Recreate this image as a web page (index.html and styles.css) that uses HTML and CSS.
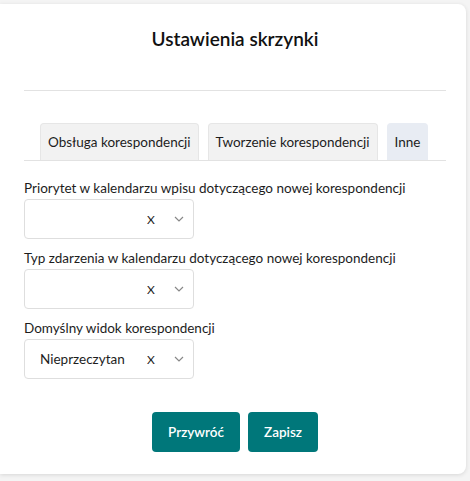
FILE: index.html
```html
<!DOCTYPE html>
<html lang="pl">
<head>
<meta charset="utf-8">
<link rel="stylesheet" href="styles.css">
</head>
<body>
<div class="card">
  <h1 class="title">Ustawienia skrzynki</h1>
  <hr class="divider">
  <div class="tabs">
    <div class="tab">Obsługa korespondencji</div>
    <div class="tab">Tworzenie korespondencji</div>
    <div class="tab active">Inne</div>
  </div>
  <div class="field">
    <label class="label">Priorytet w kalendarzu wpisu dotyczącego nowej korespondencji</label>
    <div class="select"><span class="value"></span><span class="clear">X</span><svg class="chev" width="10" height="6" viewBox="0 0 10 6"><path d="M1 1l4 4 4-4" fill="none" stroke="#888" stroke-width="1.2"/></svg></div>
  </div>
  <div class="field">
    <label class="label">Typ zdarzenia w kalendarzu dotyczącego nowej korespondencji</label>
    <div class="select"><span class="value"></span><span class="clear">X</span><svg class="chev" width="10" height="6" viewBox="0 0 10 6"><path d="M1 1l4 4 4-4" fill="none" stroke="#888" stroke-width="1.2"/></svg></div>
  </div>
  <div class="field">
    <label class="label">Domyślny widok korespondencji</label>
    <div class="select"><span class="value">Nieprzeczytan</span><span class="clear">X</span><svg class="chev" width="10" height="6" viewBox="0 0 10 6"><path d="M1 1l4 4 4-4" fill="none" stroke="#888" stroke-width="1.2"/></svg></div>
  </div>
  <div class="actions">
    <button class="btn">Przywróć</button>
    <button class="btn">Zapisz</button>
  </div>
</div>
</body>
</html>
```
FILE: styles.css
```css
* { box-sizing: border-box; }
html, body { margin: 0; padding: 0; background: #f4f4f4; }
body {
  font-family: Lato, "Noto Sans", sans-serif;
  color: #1d1d1d;
  width: 470px;
  height: 481px;
  overflow: hidden;
  padding: 4px 4px 7px 0;
}
.card {
  background: #fff;
  border-radius: 0 8px 8px 0;
  box-shadow: 0 1px 4px rgba(0,0,0,0.12);
  height: 470px;
  padding: 0 20px 0 24px;
  display: flex;
  flex-direction: column;
}
.title {
  margin: 23px 0 0;
  text-align: center;
  font-size: 19px;
  font-weight: 600;
  line-height: 24px;
  color: #111;
}
.divider {
  border: 0;
  border-top: 1px solid #e2e2e2;
  margin: 39px 0 0;
}
.tabs {
  margin-top: 32px;
  display: flex;
  gap: 9px;
  padding-left: 16px;
  border-bottom: 1px solid #e2e2e2;
}
.tab {
  background: #f2f2f2;
  border: 1px solid #e6e6e6;
  border-bottom: 0;
  border-radius: 4px 4px 0 0;
  height: 37px;
  padding: 0 7px;
  font-size: 13.5px;
  line-height: 37px;
  white-space: nowrap;
  color: #1d1d1d;
}
.tab.active {
  background: #e8ecf3;
  border-color: #e8ecf3;
}
.field {
  margin-top: 18px;
  display: flex;
  flex-direction: column;
}
.field + .field { margin-top: 10px; }
.label {
  font-size: 13.5px;
  line-height: 18px;
  color: #1d1d1d;
  white-space: nowrap;
}
.select {
  margin-top: 2px;
  width: 170px;
  height: 40px;
  border: 1px solid #dedede;
  border-radius: 4px;
  display: flex;
  align-items: center;
  padding-left: 15px;
  font-size: 13.5px;
}
.value { flex: 1; color: #1d1d1d; }
.clear { font-size: 12px; color: #222; width: 24px; }
.chev { margin-right: 9px; margin-left: 3px; }
.actions {
  margin-top: 33px;
  display: flex;
  justify-content: center;
  gap: 8px;
}
.btn {
  background: #00777a;
  color: #fff;
  border: 0;
  border-radius: 4px;
  height: 40px;
  padding: 0 16px;
  font-family: Lato, "Noto Sans", sans-serif;
  font-size: 13.5px;
  font-weight: 600;
}
```
